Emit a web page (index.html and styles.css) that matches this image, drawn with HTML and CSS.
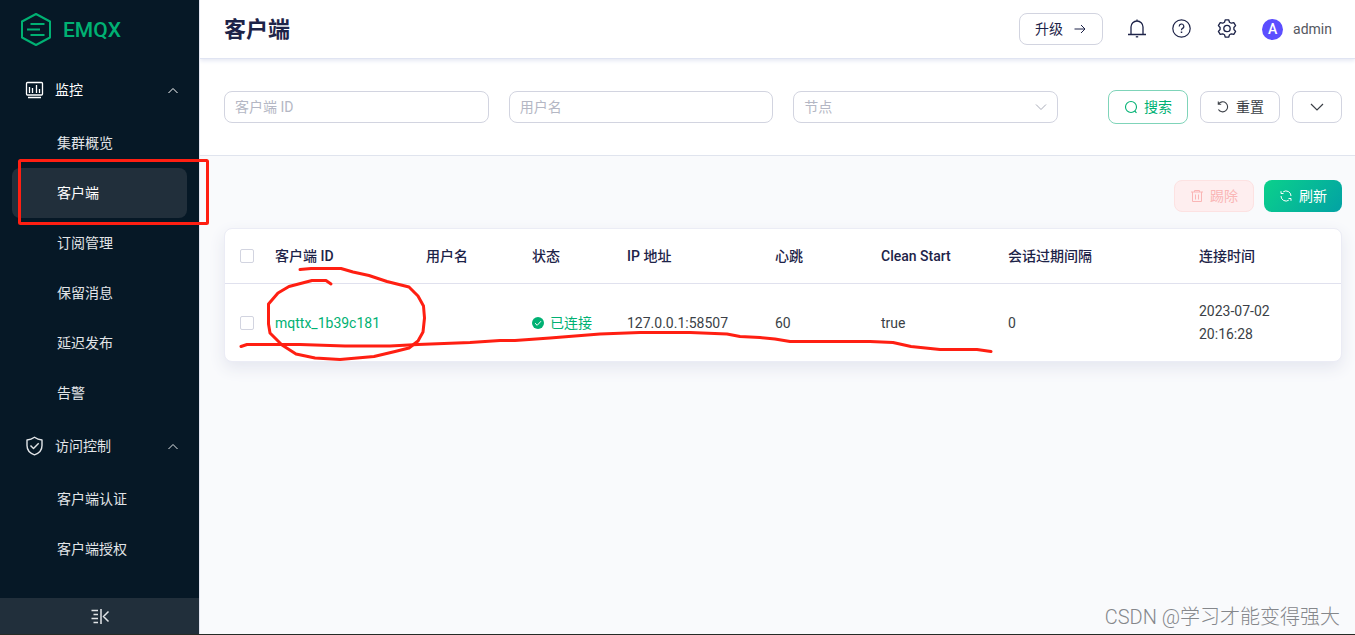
FILE: index.html
```
<!DOCTYPE html>
<html lang="zh-CN">
<head>
<meta charset="utf-8">
<title>EMQX - 客户端</title>
<link rel="stylesheet" href="styles.css">
</head>
<body>
<div class="app">
  <aside class="sidebar">
    <a class="brand" href="#">
      <svg class="brand-mark" viewBox="0 0 32 36" fill="none" stroke="currentColor" stroke-width="2" stroke-linejoin="round">
        <path d="M16 2 30 9.500V25.500L16 33 2 25.500V9.500Z"/>
        <path d="M10.500 12H24.500M7 17.500H20M10.500 23H24.500"/>
      </svg>
      <span>EMQX</span>
    </a>
    <nav class="menu">
      <button class="group current" type="button">
        <svg class="group-icon" viewBox="0 0 20 20" fill="none" stroke="currentColor" stroke-width="1.300">
          <rect x="2.500" y="2.500" width="16" height="12.500" rx="1"/>
          <path d="M5.500 13V7M8.500 13V8M12.500 13V5M15.500 13V9M4 17.500H17"/>
        </svg>
        <span>监控</span>
        <svg class="caret" viewBox="0 0 12 12" fill="none" stroke="currentColor"><path d="M1.500 9 6 4.500 10.500 9"/></svg>
      </button>
      <a class="item" href="#">集群概览</a>
      <a class="item active" href="#">客户端</a>
      <a class="item" href="#">订阅管理</a>
      <a class="item" href="#">保留消息</a>
      <a class="item" href="#">延迟发布</a>
      <a class="item" href="#">告警</a>
      <button class="group" type="button">
        <svg class="group-icon" viewBox="0 0 20 20" fill="none" stroke="currentColor" stroke-width="1.400" stroke-linejoin="round">
          <path d="M10.500 1.300C12.800 3 15.300 3.800 18 4V9.500C18 14 15 17.300 10.500 18.800 6 17.300 3 14 3 9.500V4C5.700 3.800 8.200 3 10.500 1.300Z"/>
          <path d="M6.500 9.500 9.500 12.600 14.700 7.200"/>
        </svg>
        <span>访问控制</span>
        <svg class="caret" viewBox="0 0 12 12" fill="none" stroke="currentColor"><path d="M1.500 9 6 4.500 10.500 9"/></svg>
      </button>
      <a class="item" href="#">客户端认证</a>
      <a class="item" href="#">客户端授权</a>
    </nav>
    <button class="collapse" type="button" aria-label="收起菜单">
      <svg viewBox="0 0 20 18" fill="none" stroke="currentColor" stroke-width="1.500">
        <path d="M1.500 3.500H8M3.500 7.500H8M1.500 11.500H8M3.500 15.500H8M11 2V17M18.500 4.500 13.500 9.500 18.500 14.500"/>
      </svg>
    </button>
  </aside>

  <div class="page">
    <header class="topbar">
      <h1>客户端</h1>
      <button class="btn upgrade" type="button">升级
        <svg class="icon" viewBox="0 0 14 14" fill="none" stroke="currentColor"><path d="M1.500 7H12M8 3 12 7 8 11"/></svg>
      </button>
      <div class="tools">
        <button class="tool" type="button" aria-label="告警">
          <svg viewBox="0 0 20 20" fill="none" stroke="currentColor" stroke-width="1.300">
            <path d="M1 15.500H19M4 15.500V8A6 6 0 0 1 16 8V15.500M10 2V0.500"/><path d="M8.800 17.800H11.200"/>
          </svg>
        </button>
        <button class="tool" type="button" aria-label="帮助">
          <svg viewBox="0 0 20 20" fill="none" stroke="currentColor" stroke-width="1.200">
            <circle cx="9.500" cy="9.500" r="8.700"/><path d="M7.200 7.500A2.300 2.300 0 1 1 10.500 9.400Q9.500 9.900 9.500 11.200"/><path d="M9.500 12.500V14" stroke-width="1.500"/>
          </svg>
        </button>
        <button class="tool" type="button" aria-label="设置">
          <svg viewBox="0 0 20 20" fill="none" stroke="currentColor" stroke-width="1.300" stroke-linejoin="round">
            <path d="M8.300 0.800H11.700L12.500 3.200 14.300 4.200 16.800 3.600 18.600 6.600 16.900 8.500V10.500L18.600 12.400 16.800 15.400 14.300 14.800 12.500 15.800 11.700 18.200H8.300L7.500 15.800 5.700 14.800 3.200 15.400 1.400 12.400 3.100 10.500V8.500L1.400 6.600 3.200 3.600 5.700 4.200 7.500 3.200Z"/>
            <circle cx="10" cy="9.500" r="3.200"/>
          </svg>
        </button>
      </div>
      <button class="user" type="button"><span class="avatar">A</span><span>admin</span></button>
    </header>

    <form class="filters">
      <input class="field" type="text" placeholder="客户端 ID" aria-label="客户端 ID">
      <input class="field" type="text" placeholder="用户名" aria-label="用户名">
      <div class="select-wrap">
        <select class="field" aria-label="节点"><option>节点</option></select>
        <svg class="select-caret" viewBox="0 0 14 14" fill="none" stroke="currentColor"><path d="M2 4.500 7 9.500 12 4.500"/></svg>
      </div>
      <div class="filter-actions">
        <button class="btn search" type="button">
          <svg class="icon" viewBox="0 0 14 14" fill="none" stroke="currentColor" stroke-width="1.100"><circle cx="7" cy="7" r="5.500"/><path d="M10.700 11 12.500 12.800"/></svg>搜索
        </button>
        <button class="btn reset" type="button">
          <svg class="icon" viewBox="0 0 14 14" fill="none" stroke="currentColor" stroke-width="1.100"><path d="M2.500 4A5 5 0 1 1 2.400 9.500M2.300 1.500V4.300H5.200"/></svg>重置
        </button>
        <button class="btn more" type="button" aria-label="展开">
          <svg class="icon" viewBox="0 0 14 14" fill="none" stroke="currentColor" stroke-width="1.200"><path d="M1 4 7 10 13 4"/></svg>
        </button>
      </div>
    </form>

    <main class="content">
      <div class="actions">
        <button class="btn kick" type="button" disabled>
          <svg class="icon" viewBox="0 0 14 14" fill="none" stroke="currentColor"><path d="M1 3H13M4.500 3V1.500H9.500V3M2.500 3V12.500H11.500V3M5.500 5.500V10.500M8.500 5.500V10.500"/></svg>踢除
        </button>
        <button class="btn refresh" type="button">
          <svg class="icon" viewBox="0 0 14 14" fill="none" stroke="currentColor"><path d="M4.200 2.800A5 5 0 0 1 12 7M9.800 11.200A5 5 0 0 1 2 7M2 2.200V4.500H4.500M12 11.800V9.500H9.500"/></svg>刷新
        </button>
      </div>
      <div class="card">
        <table>
          <colgroup>
            <col class="c-check"><col class="c-id"><col class="c-user"><col class="c-status"><col class="c-ip"><col class="c-beat"><col class="c-clean"><col class="c-expiry"><col class="c-time">
          </colgroup>
          <thead>
            <tr>
              <th><input class="check" type="checkbox" aria-label="全选"></th>
              <th>客户端 ID</th><th>用户名</th><th>状态</th><th>IP 地址</th><th>心跳</th><th>Clean Start</th><th>会话过期间隔</th><th>连接时间</th>
            </tr>
          </thead>
          <tbody>
            <tr>
              <td><input class="check" type="checkbox" aria-label="选择 mqttx_1b39c181"></td>
              <td><a class="client" href="#">mqttx_1b39c181</a></td>
              <td></td>
              <td><span class="status"><svg viewBox="0 0 12 12"><circle cx="6" cy="6" r="6" fill="currentColor"/><path d="M3 6.200 5.200 8.300 9 4.200" fill="none" stroke="#fff"/></svg>已连接</span></td>
              <td>127.0.0.1:58507</td>
              <td>60</td>
              <td>true</td>
              <td>0</td>
              <td>2023-07-02<br>20:16:28</td>
            </tr>
          </tbody>
        </table>
      </div>
      <p class="watermark">CSDN @学习才能变得强大</p>
    </main>
  </div>
</div>
<svg class="markup" width="1355" height="635" viewBox="0 0 1355 635" fill="none" stroke="#ff1f12" stroke-width="3" stroke-linecap="round" stroke-linejoin="round" aria-hidden="true">
  <rect x="19.500" y="160.500" width="188" height="63" rx="1"/>
  <path d="M300 269.500 311 268.500H341L353 272 369 275.500 387 281.500 409 287 418 296 423.500 306 424.500 318 423 332 418 341 409 348 395 351.500 374 356.500 340 359.500 315 358 296 354 282 345 270 333 268.500 324V304L278 293 289 286.500 312 280.500H326L331 284"/>
  <path d="M241 346.500 247 344.500H300L345 346H390L418 344.500 470 342.500 500 340.500H515L550 338 600 334 640 332.500H690L727 334 740 336.500 760 337.500 775 339 790 341.500H870L893 342.500 911 346.500 940 349.500H977L991 351.500"/>
</svg>
</body>
</html>
```
FILE: styles.css
```
* { box-sizing: border-box; }

body {
  margin: 0;
  font: 14px/22px Roboto, "Noto Sans CJK SC", sans-serif;
  color: #3b3f46;
  background: #f9fafc;
}

button, input, select { font: inherit; color: inherit; }
button { padding: 0; border: 0; background: none; cursor: pointer; }
a { color: inherit; text-decoration: none; }

.app {
  display: flex;
  min-height: 100vh;
  border-bottom: 1px solid #262b26;
}

/* Sidebar */
.sidebar {
  display: flex;
  flex: none;
  flex-direction: column;
  width: 200px;
  border-right: 1px solid #e2e5f0;
  background: #061826;
  color: #e2e5e8;
  z-index: 2;
}

.brand {
  display: flex;
  align-items: center;
  gap: 11px;
  height: 59px;
  padding-left: 20px;
  color: #00b173;
  font-size: 21px;
  font-weight: 500;
}
.brand-mark { width: 32px; height: 36px; }

.menu { flex: 1; padding-top: 3px; }

.group {
  display: flex;
  align-items: center;
  width: 100%;
  height: 56px;
  padding: 0 20px 0 24px;
  text-align: left;
}
.group.current { color: #fff; }
.group span { flex: 1; padding-left: 11px; }
.group-icon { width: 20px; height: 20px; }
.caret { width: 12px; height: 12px; }

.item {
  display: flex;
  align-items: center;
  height: 50px;
  margin: 0 12px;
  padding-left: 45px;
  border-radius: 8px;
}
.item.active { background: #212f3b; color: #fff; }

.collapse {
  display: flex;
  align-items: center;
  justify-content: center;
  height: 36px;
  background: #212f3b;
}
.collapse svg { width: 20px; height: 18px; }

/* Top bar */
.page {
  display: flex;
  flex: 1;
  flex-direction: column;
  min-width: 0;
}

.topbar {
  display: flex;
  align-items: center;
  height: 59px;
  padding: 0 23px 0 24px;
  border-bottom: 1px solid #e0e4f2;
  background: #fff;
  box-shadow: 0 2px 4px #e6e9f4;
  z-index: 1;
}
.topbar h1 {
  flex: 1;
  margin: 0;
  padding-top: 2px;
  color: #1d2348;
  font-size: 22px;
  line-height: 32px;
  font-weight: 700;
}

.btn {
  display: flex;
  align-items: center;
  justify-content: center;
  gap: 6px;
  height: 32px;
  border: 1px solid #d2d4e0;
  border-radius: 8px;
  background: #fff;
}
.icon { width: 14px; height: 14px; }

.upgrade { width: 84px; gap: 10px; color: #1d2348; }

.tools { display: flex; gap: 25px; padding: 0 25px 0 24px; color: #1d2348; }
.tool { width: 20px; height: 20px; }
.tool svg { display: block; width: 20px; height: 20px; }

.user { display: flex; align-items: center; gap: 10px; color: #55585f; }
.avatar {
  width: 21px;
  height: 21px;
  border-radius: 50%;
  background: #5b4eff;
  color: #fff;
  font-weight: 500;
  line-height: 21px;
}

/* Filters */
.filters {
  display: grid;
  grid-template-columns: repeat(3, 1fr) auto;
  align-items: center;
  gap: 20px;
  padding: 31px 13px 31px 24px;
  border-bottom: 1px solid #e0e4ee;
  background: #fff;
}
.field {
  width: 100%;
  height: 32px;
  padding: 0 10px;
  border: 1px solid #d2d4e0;
  border-radius: 8px;
  outline: 0;
  background: #fff;
}
.field::placeholder, select.field { color: #b4b7c4; opacity: 1; }
select.field { appearance: none; }

.select-wrap { position: relative; display: flex; }
.select-caret {
  position: absolute;
  top: 9px;
  right: 10px;
  width: 14px;
  height: 14px;
  color: #a8abb8;
  pointer-events: none;
}

.filter-actions { display: flex; align-items: center; gap: 12px; padding-left: 30px; }
.search { width: 80px; height: 34px; border-color: #7fd4b9; color: #00b173; }
.reset { width: 80px; }
.more { width: 50px; }

/* Content */
.content {
  display: flex;
  flex: 1;
  flex-direction: column;
  padding: 24px 13px 0 24px;
}

.actions { display: flex; justify-content: flex-end; gap: 10px; }
.kick { width: 80px; border-color: #fde2e2; background: #feeeef; color: #fab6b6; }
.refresh {
  width: 78px;
  border: 0;
  background: linear-gradient(130deg, #0bd18b, #02a2a4);
  color: #fff;
}

.card {
  margin-top: 16px;
  border: 1px solid #ebecf5;
  border-radius: 8px;
  background: #fff;
  box-shadow: 0 6px 16px #e4e6ef;
}

table { width: 100%; table-layout: fixed; border-collapse: collapse; }
th, td { padding: 0 12px; text-align: left; }
th { height: 54px; border-bottom: 1px solid #e0e1ee; color: #1d2348; font-weight: 500; }
td { height: 78px; padding-top: 2px; line-height: 23px; }
th:first-child, td:first-child { padding-left: 15px; padding-right: 0; }

.c-check { width: 38px; }
.c-id { width: 151px; }
.c-user { width: 106px; }
.c-status { width: 95px; }
.c-ip { width: 148px; }
.c-beat { width: 106px; }
.c-clean { width: 127px; }
.c-expiry { width: 191px; }
.c-time { width: 154px; }

.check {
  display: block;
  appearance: none;
  width: 14px;
  height: 14px;
  margin: 0;
  border: 1px solid #d2d4e0;
  border-radius: 2px;
  background: #fff;
}
.client, .status { color: #00b173; }
.status { display: flex; align-items: center; gap: 6px; }
.status svg { width: 12px; height: 12px; }

.watermark {
  margin: auto 2px 3px auto;
  color: #85878b;
  font: 300 20px/28px Roboto, "Noto Sans CJK SC", sans-serif;
}

/* Hand-drawn marks over the page */
.markup { position: absolute; top: 0; left: 0; z-index: 3; pointer-events: none; }
```
